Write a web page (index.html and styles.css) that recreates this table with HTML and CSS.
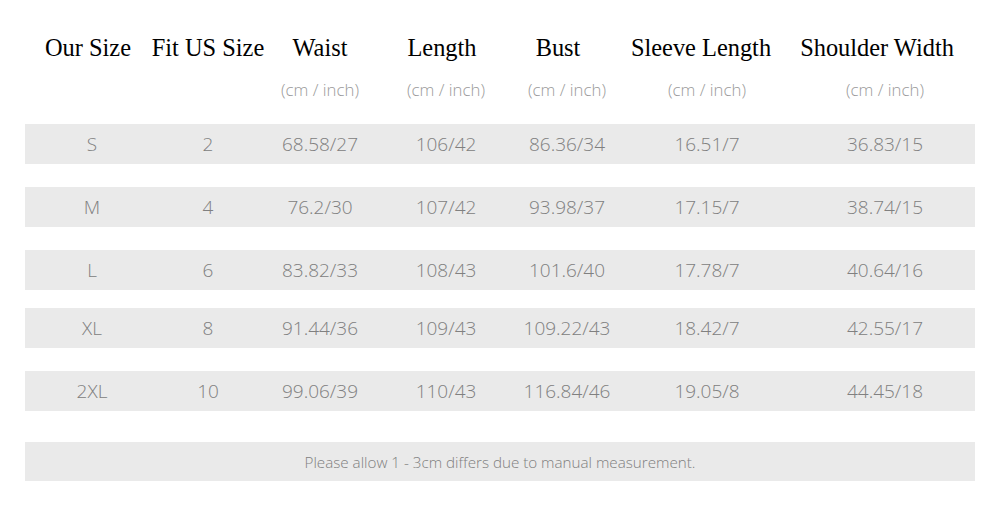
FILE: index.html
```
<!DOCTYPE html>
<html>
<head>
<meta charset="utf-8">
<link rel="stylesheet" href="styles.css">
</head>
<body>
<div class="chart">
  <div class="head">
    <div>Our Size</div>
    <div>Fit US Size</div>
    <div>Waist</div>
    <div>Length</div>
    <div>Bust</div>
    <div>Sleeve Length</div>
    <div>Shoulder Width</div>
  </div>
  <div class="cols units">
    <div></div>
    <div></div>
    <div>(cm / inch)</div>
    <div>(cm / inch)</div>
    <div>(cm / inch)</div>
    <div>(cm / inch)</div>
    <div class="last">(cm / inch)</div>
  </div>
  <div class="rows">
    <div class="cols row">
      <div>S</div><div>2</div><div>68.58/27</div><div>106/42</div><div>86.36/34</div><div>16.51/7</div><div class="last">36.83/15</div>
    </div>
    <div class="cols row">
      <div>M</div><div>4</div><div>76.2/30</div><div>107/42</div><div>93.98/37</div><div>17.15/7</div><div class="last">38.74/15</div>
    </div>
    <div class="cols row">
      <div>L</div><div>6</div><div>83.82/33</div><div>108/43</div><div>101.6/40</div><div>17.78/7</div><div class="last">40.64/16</div>
    </div>
    <div class="cols row tight">
      <div>XL</div><div>8</div><div>91.44/36</div><div>109/43</div><div>109.22/43</div><div>18.42/7</div><div class="last">42.55/17</div>
    </div>
    <div class="cols row">
      <div>2XL</div><div>10</div><div>99.06/39</div><div>110/43</div><div>116.84/46</div><div>19.05/8</div><div class="last">44.45/18</div>
    </div>
  </div>
  <div class="note">Please allow 1 - 3cm differs due to manual measurement.</div>
</div>
</body>
</html>
```
FILE: styles.css
```
html, body {
  margin: 0;
  padding: 0;
  background: #ffffff;
}

.chart {
  width: 950px;
  margin: 0 25px;
  padding-top: 36px;
}

.head {
  display: grid;
  grid-template-columns: 126px 114px 110px 134px 98px 188px 164px;
  font-family: "Liberation Serif", "Times New Roman", serif;
  font-size: 24.4px;
  line-height: 24px;
  color: #000;
  text-align: center;
  white-space: nowrap;
}

.cols {
  display: grid;
  grid-template-columns: 134px 98px 126px 126px 116px 164px 1fr;
  text-align: center;
  white-space: nowrap;
  font-family: "Open Sans", "Liberation Sans", sans-serif;
  font-weight: 300;
}

.cols .last {
  padding-left: 6px;
}

.units {
  margin-top: 19px;
  font-size: 16.8px;
  line-height: 22px;
  color: #9a9a9a;
}

.rows {
  margin-top: 23px;
  display: flex;
  flex-direction: column;
  gap: 23px;
}

.row {
  height: 40px;
  line-height: 40px;
  background: #eaeaea;
  font-size: 19px;
  color: #808080;
}

.row.tight {
  margin-top: -5px;
}

.note {
  margin-top: 31px;
  height: 39px;
  line-height: 40px;
  background: #eaeaea;
  text-align: center;
  font-family: "Open Sans", "Liberation Sans", sans-serif;
  font-weight: 300;
  font-size: 15.2px;
  color: #808080;
}
```
